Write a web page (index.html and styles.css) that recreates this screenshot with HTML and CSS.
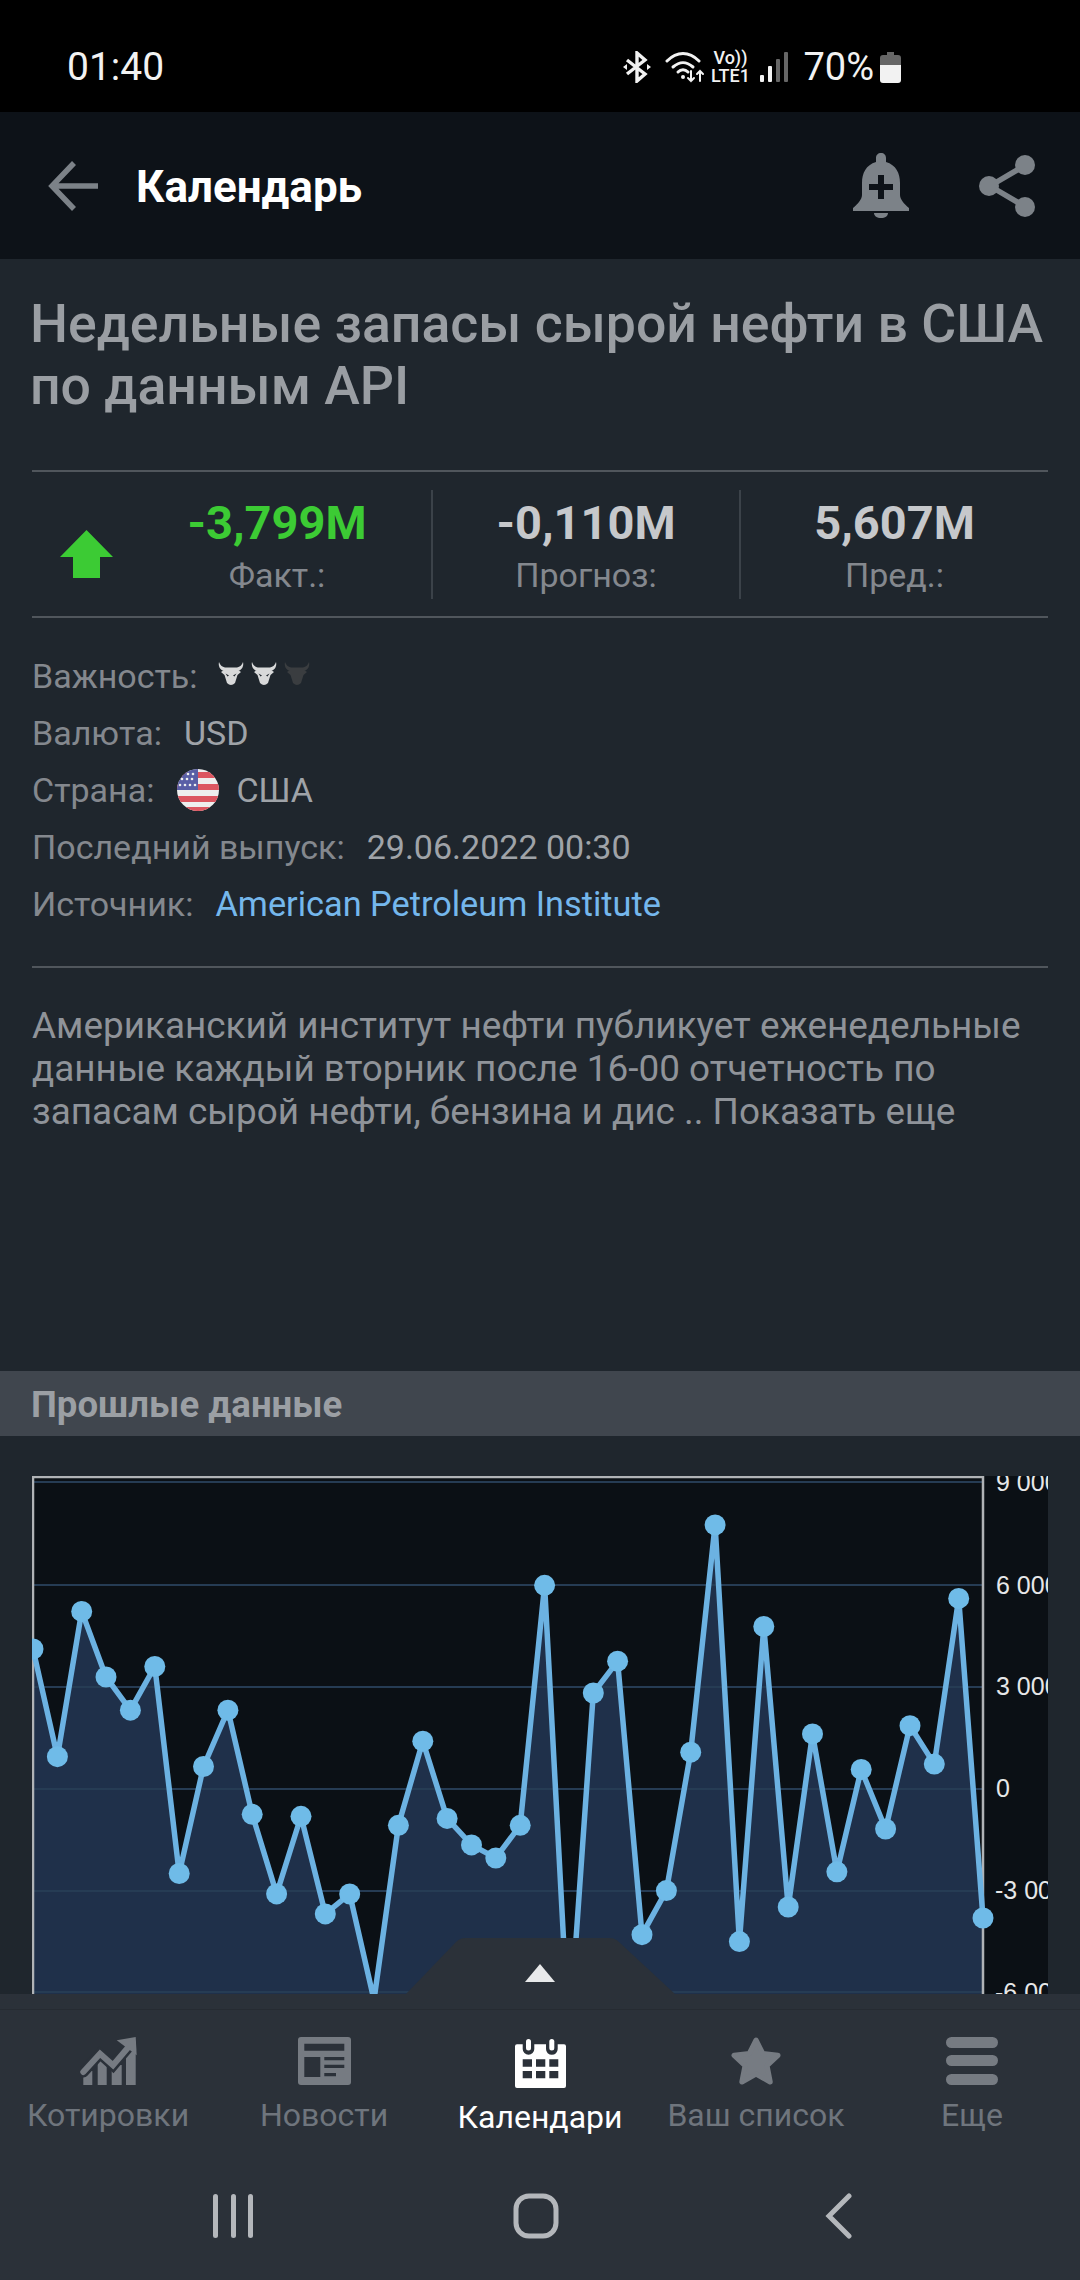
FILE: index.html
```html
<!DOCTYPE html>
<html lang="ru">
<head>
  <meta charset="UTF-8" />
  <meta name="viewport" content="width=device-width, initial-scale=1.0"/>
  <title>Календарь</title>
  <link rel="stylesheet" href="styles.css">
</head>
<body>
  <div class="status-bar">
    <span class="clock">01:40</span>
    <div class="status-icons">
      <svg class="bt-icon" viewBox="0 0 28 32" fill="none" stroke="#f2f2f2" stroke-width="3.4">
        <path d="M4 9l18 14-8 7V2l8 7L4 23"/>
        <path d="M0 16l4-3v6zM28 16l-4-3v6z" fill="#f2f2f2" stroke="none"/>
      </svg>
      <svg class="wifi-icon" viewBox="0 0 40 32" fill="none" stroke="#f2f2f2" stroke-width="3" stroke-linecap="round">
        <path d="M2 10C12 0 24 0 34 10"/>
        <path d="M8 16c7-6 13-6 20 0"/>
        <path d="M13 21c3-3 7-3 10 0"/>
        <circle cx="18" cy="26" r="2" fill="#f2f2f2" stroke="none"/>
        <path d="M26 20v10M23 27l3 3 3-3M35 30V20M32 23l3-3 3 3" stroke-width="2"/>
      </svg>
      <div class="volte"><span>Vo))</span><span>LTE1</span></div>
      <svg class="signal-icon" viewBox="0 0 28 32">
        <rect x="0" y="24" width="4" height="7" rx="1" fill="#f2f2f2"/>
        <rect x="8" y="15" width="4" height="16" rx="1" fill="#f2f2f2"/>
        <rect x="16" y="8" width="4" height="23" rx="1" fill="#666"/>
        <rect x="24" y="1" width="4" height="30" rx="1" fill="#666"/>
      </svg>
      <span class="battery-text">70%</span>
      <svg class="battery-icon" viewBox="0 0 21 31">
        <path d="M7 0h7v3h4a3 3 0 0 1 3 3v7H0V6a3 3 0 0 1 3-3h4z" fill="#666"/>
        <path d="M0 13h21v15a3 3 0 0 1-3 3H3a3 3 0 0 1-3-3z" fill="#f2f2f2"/>
      </svg>
    </div>
  </div>

  <header class="app-bar">
    <svg class="back-icon" viewBox="0 0 50 50" fill="none" stroke="#7c8288" stroke-width="5.5">
      <path d="M26 2L4 25l22 23M4 25h46"/>
    </svg>
    <h1 class="app-title">Календарь</h1>
    <svg class="bell-icon" viewBox="0 0 56 65">
      <path d="M28 0c3 0 5 2 5 5v4c10 3 14 11 14 21v12c0 4 4 9 9 13v3H0v-3c5-4 9-9 9-13V30C9 20 13 12 23 9V5c0-3 2-5 5-5z" fill="#7c8288"/>
      <path d="M21 60h14c0 3-3 5-7 5s-7-2-7-5z" fill="#7c8288"/>
      <path d="M25 22h6v9h9v6h-9v9h-6v-9h-9v-6h9z" fill="#0d1218"/>
    </svg>
    <svg class="share-icon" viewBox="0 0 56 62" fill="#7c8288" stroke="#7c8288">
      <path d="M45 11L11 31l34 20" fill="none" stroke-width="5.5"/>
      <circle cx="46" cy="10" r="10" stroke="none"/>
      <circle cx="10" cy="31" r="10" stroke="none"/>
      <circle cx="46" cy="52" r="10" stroke="none"/>
    </svg>
  </header>

  <main class="content">
    <h2 class="event-title">Недельные запасы сырой нефти в США по данным API</h2>

    <section class="stats">
      <div class="stat-arrow">
        <svg class="up-arrow" viewBox="0 0 53 48"><path d="M26.500 0L53 27H40v21H13V27H0z" fill="#3ccb34"/></svg>
      </div>
      <div class="stat">
        <div class="stat-value green">-3,799M</div>
        <div class="stat-label">Факт.:</div>
      </div>
      <div class="stat">
        <div class="stat-value">-0,110M</div>
        <div class="stat-label">Прогноз:</div>
      </div>
      <div class="stat">
        <div class="stat-value">5,607M</div>
        <div class="stat-label">Пред.:</div>
      </div>
    </section>

    <section class="info">
      <div class="info-row">
        <span class="info-label">Важность:</span>
        <div class="bulls">
          <svg class="bull" viewBox="0 0 26 24">
            <path d="M1 0C0 4 2 8 6 9h14c4-1 6-5 5-9-1 3-3 5-6 5.500H7C4 5 2 3 1 0z"/>
            <path d="M3 10l3-2h14l3 2-3.500 3L17 21q-4 4-8 0l-2.500-8z"/>
            <path class="bull-eye" d="M7.500 11.500l3.500 2-1.500 1zM18.500 11.500l-3.500 2 1.500 1z"/>
          </svg>
          <svg class="bull" viewBox="0 0 26 24">
            <path d="M1 0C0 4 2 8 6 9h14c4-1 6-5 5-9-1 3-3 5-6 5.500H7C4 5 2 3 1 0z"/>
            <path d="M3 10l3-2h14l3 2-3.500 3L17 21q-4 4-8 0l-2.500-8z"/>
            <path class="bull-eye" d="M7.500 11.500l3.500 2-1.500 1zM18.500 11.500l-3.500 2 1.500 1z"/>
          </svg>
          <svg class="bull off" viewBox="0 0 26 24">
            <path d="M1 0C0 4 2 8 6 9h14c4-1 6-5 5-9-1 3-3 5-6 5.500H7C4 5 2 3 1 0z"/>
            <path d="M3 10l3-2h14l3 2-3.500 3L17 21q-4 4-8 0l-2.500-8z"/>
          </svg>
        </div>
      </div>
      <div class="info-row">
        <span class="info-label">Валюта:</span>
        <span class="info-value">USD</span>
      </div>
      <div class="info-row">
        <span class="info-label">Страна:</span>
        <svg class="flag" viewBox="0 0 42 42">
          <defs><clipPath id="flagClip"><circle cx="21" cy="21" r="21"/></clipPath></defs>
          <g clip-path="url(#flagClip)">
            <rect width="42" height="42" fill="#eeeeee"/>
            <rect y="3" width="42" height="6" fill="#dc5560"/>
            <rect y="15" width="42" height="6" fill="#dc5560"/>
            <rect y="27" width="42" height="6" fill="#dc5560"/>
            <rect y="38" width="42" height="6" fill="#dc5560"/>
            <rect width="21" height="21" fill="#5a5fa6"/>
            <g fill="#eeeeee">
              <circle cx="11" cy="5" r="1.300"/><circle cx="16" cy="5" r="1.300"/>
              <circle cx="5" cy="10" r="1.300"/><circle cx="10" cy="10" r="1.300"/><circle cx="15" cy="10" r="1.300"/>
              <circle cx="3" cy="16" r="1.300"/><circle cx="8" cy="16" r="1.300"/><circle cx="13" cy="16" r="1.300"/><circle cx="18" cy="16" r="1.300"/>
            </g>
          </g>
        </svg>
        <span class="info-value country">США</span>
      </div>
      <div class="info-row">
        <span class="info-label">Последний выпуск:</span>
        <span class="info-value">29.06.2022 00:30</span>
      </div>
      <div class="info-row">
        <span class="info-label">Источник:</span>
        <a class="info-link">American Petroleum Institute</a>
      </div>
    </section>

    <p class="description">Американский институт нефти публикует еженедельные данные каждый вторник после 16-00 отчетность по запасам сырой нефти, бензина и дис .. Показать еще</p>

    <div class="section-head">Прошлые данные</div>

    <svg class="chart" viewBox="32 1476 1016 520">
      <rect x="32" y="1476" width="1016" height="520" fill="#0b1015"/>
      <path class="area" d="M33 1649L57.400 1756.700 81.700 1611.400 106 1677 130.400 1710.200 154.800 1666.500 179.200 1873.500 203.500 1766.500 227.900 1710.200 252.200 1814.300 276.600 1893.900 301 1816.300 325.300 1913.900 349.700 1893.900 374 2000 398.400 1825.300 422.800 1741.200 447.100 1818.400 471.500 1844.900 495.800 1858 520.200 1825.300 544.600 1585.300 568.900 2040 593.300 1693 617.600 1661.200 642 1934.700 666.400 1890.600 690.700 1752.200 715.100 1524.900 739.400 1941.600 763.800 1626.500 788.200 1907 812.500 1733.900 836.900 1871.800 861.200 1769.400 885.600 1829 910 1725.700 934.300 1764.100 958.700 1598.400 983 1918V2040H33z"/>
      <path class="grid" d="M33 1482H983M33 1585H983M33 1687H983M33 1789H983M33 1891H983M33 1992H983"/>
      <path class="frame" d="M33 1996V1477H983V1996"/>
      <polyline class="line" points="33,1649 57.400,1756.700 81.700,1611.400 106,1677 130.400,1710.200 154.800,1666.500 179.200,1873.500 203.500,1766.500 227.900,1710.200 252.200,1814.300 276.600,1893.900 301,1816.300 325.300,1913.900 349.700,1893.900 374,2000 398.400,1825.300 422.800,1741.200 447.100,1818.400 471.500,1844.900 495.800,1858 520.200,1825.300 544.600,1585.300 568.900,2040 593.300,1693 617.600,1661.200 642,1934.700 666.400,1890.600 690.700,1752.200 715.100,1524.900 739.400,1941.600 763.800,1626.500 788.200,1907 812.500,1733.900 836.900,1871.800 861.200,1769.400 885.600,1829 910,1725.700 934.300,1764.100 958.700,1598.400 983,1918"/>
      <g class="dots">
        <circle cx="33" cy="1649" r="10.500"/><circle cx="57.400" cy="1756.700" r="10.500"/><circle cx="81.700" cy="1611.400" r="10.500"/><circle cx="106" cy="1677" r="10.500"/>
        <circle cx="130.400" cy="1710.200" r="10.500"/><circle cx="154.800" cy="1666.500" r="10.500"/><circle cx="179.200" cy="1873.500" r="10.500"/><circle cx="203.500" cy="1766.500" r="10.500"/>
        <circle cx="227.900" cy="1710.200" r="10.500"/><circle cx="252.200" cy="1814.300" r="10.500"/><circle cx="276.600" cy="1893.900" r="10.500"/><circle cx="301" cy="1816.300" r="10.500"/>
        <circle cx="325.300" cy="1913.900" r="10.500"/><circle cx="349.700" cy="1893.900" r="10.500"/><circle cx="398.400" cy="1825.300" r="10.500"/><circle cx="422.800" cy="1741.200" r="10.500"/>
        <circle cx="447.100" cy="1818.400" r="10.500"/><circle cx="471.500" cy="1844.900" r="10.500"/><circle cx="495.800" cy="1858" r="10.500"/><circle cx="520.200" cy="1825.300" r="10.500"/>
        <circle cx="544.600" cy="1585.300" r="10.500"/><circle cx="593.300" cy="1693" r="10.500"/><circle cx="617.600" cy="1661.200" r="10.500"/><circle cx="642" cy="1934.700" r="10.500"/>
        <circle cx="666.400" cy="1890.600" r="10.500"/><circle cx="690.700" cy="1752.200" r="10.500"/><circle cx="715.100" cy="1524.900" r="10.500"/><circle cx="739.400" cy="1941.600" r="10.500"/>
        <circle cx="763.800" cy="1626.500" r="10.500"/><circle cx="788.200" cy="1907" r="10.500"/><circle cx="812.500" cy="1733.900" r="10.500"/><circle cx="836.900" cy="1871.800" r="10.500"/>
        <circle cx="861.200" cy="1769.400" r="10.500"/><circle cx="885.600" cy="1829" r="10.500"/><circle cx="910" cy="1725.700" r="10.500"/><circle cx="934.300" cy="1764.100" r="10.500"/>
        <circle cx="958.700" cy="1598.400" r="10.500"/><circle cx="983" cy="1918" r="10.500"/>
      </g>
      <g class="axis">
        <text x="996" y="1491">9 000</text>
        <text x="996" y="1594">6 000</text>
        <text x="996" y="1695">3 000</text>
        <text x="996" y="1797">0</text>
        <text x="995" y="1899">-3 000</text>
        <text x="995" y="2001">-6 000</text>
      </g>
    </svg>
  </main>

  <nav class="bottom-nav">
    <div class="drawer-tab">
      <svg class="drawer-shape" viewBox="0 0 269 56"><path d="M0 56L50 4q4-4 9-4h145q5 0 9 4l56 52z" fill="#2b3139"/><path d="M119 44l15-18 15 18z" fill="#e8e9ea"/></svg>
    </div>
    <div class="drawer-line"></div>
    <div class="tabs">
      <div class="tab">
        <svg class="tab-icon" viewBox="0 0 57 48">
          <path d="M3.300 48V34h9v14zM17.700 48V21h9v27zM31.700 48V28h10v20zM46 48V14h9.700v34z" fill="#767b82"/>
          <path d="M3.300 35L20 16.700 33 28.300 50 8.300" fill="none" stroke="#2b3139" stroke-width="11" stroke-linecap="round"/>
          <path d="M3.300 35L20 16.700 33 28.300 50 8.300" fill="none" stroke="#767b82" stroke-width="6" stroke-linecap="round"/>
          <path d="M36.700 3.300L55.700 0l1 18.300z" fill="#767b82"/>
        </svg>
        <span class="tab-label">Котировки</span>
      </div>
      <div class="tab">
        <svg class="tab-icon" viewBox="0 0 53 48">
          <rect width="53" height="48" rx="3" fill="#767b82"/>
          <path d="M6.300 6.700h40v7h-40zM6.300 20h16v20h-16zM26.300 20h20v3.300h-20zM26.300 27.700h20V31h-20zM26.300 36H38v3.300H26.300z" fill="#2b3139"/>
        </svg>
        <span class="tab-label">Новости</span>
      </div>
      <div class="tab active">
        <svg class="tab-icon cal" viewBox="0 0 51 49">
          <path d="M2 5.300h5.700V10a5.800 5.800 0 0 0 11.600 0V5.300H31V10a5.800 5.800 0 0 0 11.700 0V5.300H49a2 2 0 0 1 2 2V47a2 2 0 0 1-2 2H2a2 2 0 0 1-2-2V7.300a2 2 0 0 1 2-2z" fill="#fff"/>
          <path d="M7.700 20.300H17v7.400H7.700zM21 20.300h9.300v7.400H21zM34.300 20.300h9v7.400h-9zM7.700 32H17v7.300H7.700zM21 32h9.300v7.300H21zM34.300 32h9v7.300h-9z" fill="#2b3139"/>
          <rect x="11" y="0" width="5" height="11.500" rx="2.500" fill="#fff"/><rect x="34.300" y="0" width="5" height="11.500" rx="2.500" fill="#fff"/>
        </svg>
        <span class="tab-label">Календари</span>
      </div>
      <div class="tab">
        <svg class="tab-icon" viewBox="0 0 48 46"><path d="M24 3l6.500 13L45 17.500 34.500 27.500 37.500 43 24 35.500 10.500 43l3-15.500L3 17.500 17.500 16z" fill="#767b82" stroke="#767b82" stroke-width="5" stroke-linejoin="round"/></svg>
        <span class="tab-label">Ваш список</span>
      </div>
      <div class="tab">
        <svg class="tab-icon" viewBox="0 0 52 48" fill="#767b82">
          <rect width="52" height="11" rx="5.500"/><rect y="18" width="52" height="11" rx="5.500"/><rect y="37" width="52" height="11" rx="5.500"/>
        </svg>
        <span class="tab-label">Еще</span>
      </div>
    </div>
    <div class="soft-keys">
      <svg class="key" viewBox="0 0 302 46" fill="#b4b7bb"><rect x="130" y="1" width="5" height="44" rx="2.500"/><rect x="148" y="1" width="5" height="44" rx="2.500"/><rect x="165" y="1" width="5" height="44" rx="2.500"/></svg>
      <svg class="key" viewBox="0 0 302 46" fill="none" stroke="#b4b7bb" stroke-width="5"><rect x="131" y="3" width="40" height="40" rx="13"/></svg>
      <svg class="key" viewBox="0 0 302 46" fill="none" stroke="#b4b7bb" stroke-width="5" stroke-linecap="round"><path d="M162 3l-20 20 20 20"/></svg>
    </div>
  </nav>
</body>
</html>
```

FILE: styles.css
```css
* {
  box-sizing: border-box;
}

body {
  margin: 0;
  width: 1080px;
  height: 2280px;
  overflow: hidden;
  display: flex;
  flex-direction: column;
  background: #1f262d;
  font-family: Roboto, "Noto Sans", sans-serif;
}

/* status bar */
.status-bar {
  height: 112px;
  background: #000;
  display: flex;
  align-items: center;
  padding: 22px 179px 0 67px;
  color: #f2f2f2;
}

.clock {
  font-size: 39px;
}

.status-icons {
  margin-left: auto;
  display: flex;
  align-items: center;
}

.bt-icon {
  width: 28px;
  height: 32px;
  margin-right: 14px;
}

.wifi-icon {
  width: 40px;
  height: 32px;
  margin-right: 6px;
}

.volte {
  width: 38px;
  display: flex;
  flex-direction: column;
  align-items: center;
  font-size: 18px;
  line-height: 18px;
  font-weight: 500;
  margin-right: 11px;
}

.signal-icon {
  width: 28px;
  height: 32px;
  margin-right: 15px;
}

.battery-text {
  font-size: 38px;
  margin-right: 6px;
}

.battery-icon {
  width: 21px;
  height: 31px;
}

/* app bar */
.app-bar {
  height: 147px;
  background: #0d1218;
  display: flex;
  align-items: center;
  padding: 0 45px 0 48px;
}

.back-icon {
  width: 50px;
  height: 50px;
  margin-right: 38px;
}

.app-title {
  margin: 2px 0 0;
  color: #fff;
  font-size: 44px;
  font-weight: 700;
}

.bell-icon {
  width: 56px;
  height: 65px;
  margin-left: auto;
  margin-right: 70px;
}

.share-icon {
  width: 56px;
  height: 62px;
}

/* main */
.content {
  height: 1735px;
  overflow: hidden;
}

.event-title {
  margin: 34px 20px 0 30px;
  height: 125px;
  font-size: 53.600px;
  line-height: 62px;
  font-weight: 500;
  color: #9a9ea3;
}

.stats {
  margin: 52px 32px 0;
  height: 148px;
  border-top: 2px solid #50565c;
  border-bottom: 2px solid #50565c;
  display: grid;
  grid-template-columns: 91px 308px 308px 1fr;
  align-items: center;
}

.stat-arrow {
  display: flex;
  padding: 20px 0 0 28px;
}

.up-arrow {
  width: 53px;
  height: 48px;
}

.stat {
  height: 109px;
  text-align: center;
  padding-top: 3px;
}

.stat + .stat {
  border-left: 2px solid #3b4249;
}

.stat-value {
  font-size: 47px;
  line-height: 60px;
  font-weight: 700;
  color: #c6c8cb;
}

.stat-value.green {
  color: #3ccb34;
}

.stat-label {
  font-size: 34px;
  line-height: 44px;
  color: #84888e;
}

.info {
  margin: 29px 32px 0;
  padding-bottom: 34px;
  border-bottom: 2px solid #50565c;
}

.info-row {
  height: 57px;
  display: flex;
  align-items: center;
  font-size: 34px;
}

.info-label {
  color: #84888e;
  margin-right: 22px;
}

.info-value {
  color: #9fa3a8;
}

.info-link {
  font-size: 34.300px;
  color: #75b7ec;
}

.bulls {
  display: flex;
  gap: 7px;
  margin-top: -4px;
  margin-left: -2px;
}

.bull {
  width: 26px;
  height: 24px;
  fill: #d8d9da;
}

.bull.off {
  fill: #3a3d40;
}

.bull-eye {
  fill: #1f262d;
}

.flag {
  width: 42px;
  height: 42px;
  margin-left: 1px;
  margin-right: 17px;
}

.description {
  margin: 36px 32px 0;
  height: 367px;
  font-size: 36.900px;
  line-height: 43px;
  color: #8f9399;
}

.section-head {
  height: 65px;
  background: #40464e;
  padding-left: 31px;
  font-size: 36.600px;
  line-height: 68px;
  font-weight: 700;
  color: #9b9fa4;
}

.chart {
  display: block;
  width: 1016px;
  height: 520px;
  margin: 40px 0 0 32px;
}

.area {
  fill: #1f304a;
}

.grid {
  fill: none;
  stroke: #263c54;
  stroke-width: 2;
}

.frame {
  fill: none;
  stroke: #b0b3b6;
  stroke-width: 2.500;
}

.line {
  fill: none;
  stroke: #6cb2e2;
  stroke-width: 5.500;
}

.dots {
  fill: #6fbbe8;
}

.axis {
  font-family: "Liberation Sans", Arial, sans-serif;
  font-size: 25px;
  fill: #e6e7e8;
}

/* bottom nav */
.bottom-nav {
  position: relative;
  height: 286px;
  background: #2b3139;
}

.drawer-tab {
  position: absolute;
  left: 406px;
  top: -56px;
  width: 269px;
  height: 56px;
}

.drawer-shape {
  display: block;
  width: 269px;
  height: 56px;
}

.drawer-line {
  height: 16px;
  border-bottom: 1px solid #262b32;
}

.tabs {
  display: grid;
  grid-template-columns: repeat(5, 216px);
  padding-top: 27px;
}

.tab {
  display: flex;
  flex-direction: column;
  align-items: center;
  height: 156px;
}

.tab-icon {
  height: 48px;
}

.tab-label {
  margin-top: 10px;
  font-size: 32px;
  line-height: 40px;
  color: #6f757d;
}

.tab.active .tab-label {
  color: #fff;
}

.cal {
  height: 49px;
  margin-top: 2px;
  margin-bottom: -1px;
}

.soft-keys {
  display: flex;
  justify-content: center;
  padding-right: 9px;
}

.key {
  width: 302px;
  height: 46px;
}
```
